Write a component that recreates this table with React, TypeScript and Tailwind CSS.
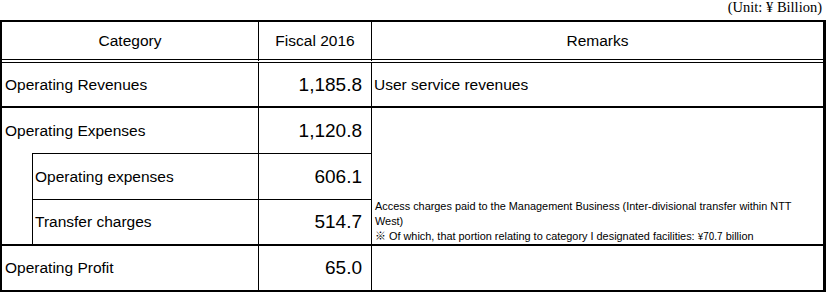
import React from "react";

export default function App() {
  const sans = "font-['Liberation_Sans',Arial,sans-serif]";
  return (
    <div className="w-[826px] h-[292px] bg-white text-black overflow-hidden">
      <div className="h-[20px] pr-[4px] text-right font-['Liberation_Serif','Times_New_Roman',serif] text-[14.5px] leading-[14px]">
        (Unit: ¥ Billion)
      </div>
      <table
        className={`${sans} w-[826px] table-fixed border-separate border-spacing-0 border-black border-t-2 border-l-2 border-r-[3px] border-b-2 text-[15.5px] leading-[18px]`}
      >
        <colgroup>
          <col className="w-[31px]" />
          <col className="w-[226px]" />
          <col className="w-[113px]" />
          <col className="w-[451px]" />
        </colgroup>
        <tbody>
          <tr className="h-[41px]">
            <td colSpan={2} className="border-black border-r border-b-4 border-double text-center align-middle">
              Category
            </td>
            <td className="border-black border-r border-b-4 border-double text-center align-middle">
              Fiscal 2016
            </td>
            <td className="border-black border-b-4 border-double text-center align-middle">
              Remarks
            </td>
          </tr>
          <tr className="h-[45px]">
            <td colSpan={2} className="border-black border-r border-b-2 pl-[3px] align-middle whitespace-nowrap">
              Operating Revenues
            </td>
            <td className="border-black border-r border-b-2 pr-[9px] text-right align-middle text-[19px]">
              1,185.8
            </td>
            <td className="border-black border-b-2 pl-[2px] align-middle whitespace-nowrap">
              User service revenues
            </td>
          </tr>
          <tr className="h-[45px]">
            <td colSpan={2} className="border-black border-r pl-[3px] align-middle whitespace-nowrap">
              Operating Expenses
            </td>
            <td className="border-black border-r pr-[9px] text-right align-middle text-[19px]">
              1,120.8
            </td>
            <td rowSpan={3} className="border-black border-b-2 pl-[3px] pb-0 align-bottom text-[10.9px] leading-[15px] whitespace-nowrap">
              <div className="h-[15px]">Access charges paid to the Management Business (Inter-divisional transfer within NTT</div>
              <div className="h-[15px]">West)</div>
              <div className="h-[15px]">
                <span className="font-['Noto_Sans_CJK_JP',sans-serif] leading-[10px]">※</span> Of which, that portion relating to category I designated facilities:{" "}
                <span className="font-['Noto_Sans_CJK_JP',sans-serif] text-[10px] leading-[10px]">¥70.7</span> billion
              </div>
            </td>
          </tr>
          <tr className="h-[47px]">
            <td rowSpan={2} className="border-black border-r border-b-2"></td>
            <td className="border-black border-t border-r border-b pl-[2px] align-middle whitespace-nowrap">
              Operating expenses
            </td>
            <td className="border-black border-t border-r border-b pr-[9px] text-right align-middle text-[19px]">
              606.1
            </td>
          </tr>
          <tr className="h-[46px]">
            <td className="border-black border-r border-b-2 pl-[2px] align-middle whitespace-nowrap">
              Transfer charges
            </td>
            <td className="border-black border-r border-b-2 pr-[9px] text-right align-middle text-[19px]">
              514.7
            </td>
          </tr>
          <tr className="h-[44px]">
            <td colSpan={2} className="border-black border-r pl-[3px] align-middle whitespace-nowrap">
              Operating Profit
            </td>
            <td className="border-black border-r pr-[9px] text-right align-middle text-[19px]">
              65.0
            </td>
            <td></td>
          </tr>
        </tbody>
      </table>
    </div>
  );
}
